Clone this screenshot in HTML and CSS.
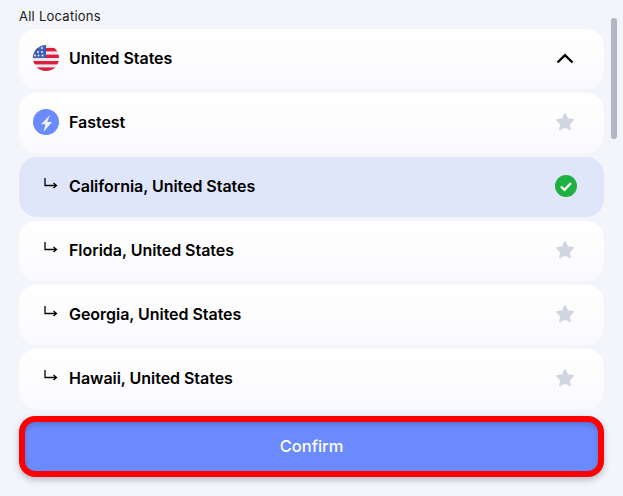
FILE: index.html
```html
<!DOCTYPE html>
<html lang="en">
<head>
    <meta charset="UTF-8">
    <meta name="viewport" content="width=device-width, initial-scale=1.0">
    <title>All Locations</title>
    <link rel="stylesheet" href="styles.css">
</head>
<body>

<div class="container">
    <div class="main">
        <div class="heading">All Locations</div>

        <div class="row">
            <svg class="icon" viewBox="0 0 26 26">
                <defs><clipPath id="flagClip"><circle cx="13" cy="13" r="13"/></clipPath></defs>
                <g clip-path="url(#flagClip)">
                    <rect width="26" height="26" fill="#e8e8ee"/>
                    <rect y="3" width="26" height="3.4" fill="#dc1f3c"/>
                    <rect y="9.6" width="26" height="3.4" fill="#dc1f3c"/>
                    <rect y="16" width="26" height="3.4" fill="#dc1f3c"/>
                    <rect y="22.4" width="26" height="3.6" fill="#dc1f3c"/>
                    <rect width="13" height="13" fill="#3d5fb4"/>
                    <g fill="#e8ecf8">
                        <circle cx="9" cy="3" r="1"/><circle cx="5" cy="7" r="1"/>
                        <circle cx="9" cy="7" r="1"/><circle cx="2" cy="10.5" r="1"/>
                        <circle cx="5.5" cy="10.5" r="1"/><circle cx="9.5" cy="10.5" r="1"/>
                    </g>
                </g>
            </svg>
            <span class="name">United States</span>
            <svg class="chevron" viewBox="0 0 18 11">
                <path d="M1.500 9.500 9 2.200l7.500 7.300" fill="none" stroke="#000" stroke-width="2.300"/>
            </svg>
        </div>

        <div class="row">
            <svg class="icon" viewBox="0 0 26 26">
                <circle cx="13" cy="13" r="13" fill="#6b8afd"/>
                <path d="M17 6 8 15.200h4.500L10.500 23l8.500-10h-4.700z" fill="#eef2ff"/>
            </svg>
            <span class="name">Fastest</span>
            <svg class="star" viewBox="0 0 20 20"><use href="#starShape"/></svg>
        </div>

        <div class="row selected">
            <svg class="arrow" viewBox="0 0 14 11"><use href="#arrowShape"/></svg>
            <span class="name">California, United States</span>
            <svg class="check" viewBox="0 0 22 22">
                <circle cx="11" cy="11" r="11" fill="#1eb040"/>
                <path d="M6 11.500l3.500 3.300L16 8" fill="none" stroke="#fff" stroke-width="2.400"/>
            </svg>
        </div>

        <div class="row">
            <svg class="arrow" viewBox="0 0 14 11"><use href="#arrowShape"/></svg>
            <span class="name">Florida, United States</span>
            <svg class="star" viewBox="0 0 20 20"><use href="#starShape"/></svg>
        </div>

        <div class="row">
            <svg class="arrow" viewBox="0 0 14 11"><use href="#arrowShape"/></svg>
            <span class="name">Georgia, United States</span>
            <svg class="star" viewBox="0 0 20 20"><use href="#starShape"/></svg>
        </div>

        <div class="row">
            <svg class="arrow" viewBox="0 0 14 11"><use href="#arrowShape"/></svg>
            <span class="name">Hawaii, United States</span>
            <svg class="star" viewBox="0 0 20 20"><use href="#starShape"/></svg>
        </div>

        <button class="confirm">Confirm</button>
    </div>

    <div class="scrollbar"></div>
</div>

<svg class="defs" width="0" height="0">
    <defs>
        <path id="starShape" fill="#d0d4e2" stroke="#d0d4e2" stroke-width="1.500" stroke-linejoin="round"
              d="M10 1.800l2.500 5.300 5.700.8-4.100 4 1 5.700L10 14.900l-5.100 2.700 1-5.700-4.100-4 5.700-.8z"/>
        <path id="arrowShape" fill="none" stroke="#000" stroke-width="1.300"
              d="M1 0v7.500h11M9.500 5l3 2.500-3 2.500"/>
    </defs>
</svg>

</body>
</html>
```

FILE: styles.css
```css
body {
    font-family: Inter, "Liberation Sans", sans-serif;
    background-color: #f4f5fb;
    margin: 0;
    padding: 0;
    color: #000;
}
.container {
    display: flex;
    height: 496px;
    overflow: hidden;
    padding-left: 19px;
    box-sizing: border-box;
}
.main {
    width: 585px;
    display: flex;
    flex-direction: column;
    gap: 4px;
}
.heading {
    font-size: 13px;
    line-height: 16px;
    height: 25px;
    padding-top: 8px;
    box-sizing: border-box;
    letter-spacing: 0.25px;
    color: #1a1a1a;
}
.row {
    height: 60px;
    flex: none;
    display: flex;
    align-items: center;
    padding: 0 27px 2px 14px;
    box-sizing: border-box;
    border-radius: 18px;
    background: linear-gradient(#ffffff, #fafafd);
}
.row.selected {
    background: #e0e6f9;
}
.name {
    flex: 1;
    font-size: 16px;
    font-weight: 600;
    letter-spacing: -0.04px;
}
.icon {
    width: 26px;
    height: 26px;
    margin-right: 10px;
}
.arrow {
    width: 14px;
    height: 11px;
    margin: -5px 11px 0 11px;
}
.star {
    width: 20px;
    height: 20px;
    margin-right: 2px;
}
.chevron {
    width: 18px;
    height: 11px;
    margin-right: 3px;
}
.check {
    width: 22px;
    height: 22px;
}
.confirm {
    height: 61px;
    flex: none;
    margin-top: 3px;
    padding-bottom: 3px;
    width: 100%;
    font-family: inherit;
    font-size: 16.5px;
    font-weight: 500;
    color: #fff;
    background-color: #6b8afd;
    border: 6px solid #ff0000;
    border-radius: 16px;
    box-shadow: 0 3px 6px rgba(40, 50, 90, 0.3), inset 0 3px 4px rgba(40, 50, 110, 0.25);
    cursor: pointer;
}
.scrollbar {
    width: 6px;
    height: 121px;
    margin: 18px 0 0 7px;
    background-color: #b1b5c6;
    border-radius: 3px;
}
.defs {
    position: absolute;
}
```
